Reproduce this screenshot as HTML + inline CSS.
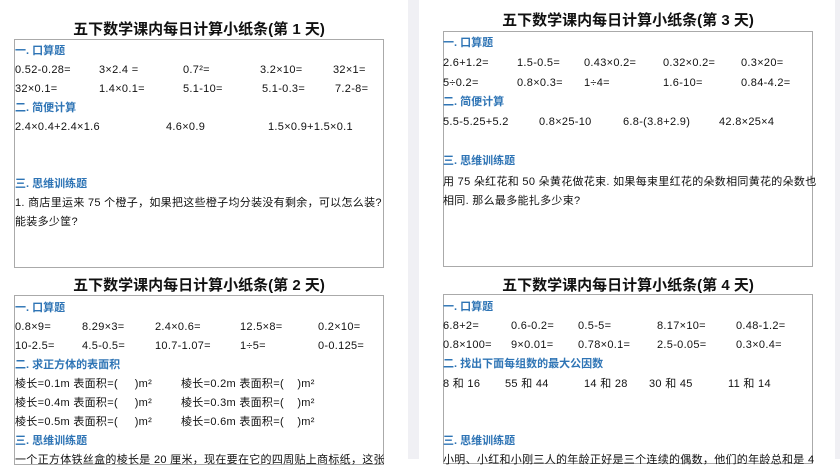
<!DOCTYPE html>
<html><head><meta charset="utf-8"><style>
body{margin:0;width:840px;height:459px;overflow:hidden;background:#fff;position:relative;font-family:"Liberation Sans","Noto Sans CJK SC",sans-serif;color:#111}
.g{position:absolute;top:0;height:459px;background:#f0f0f4}
.box{position:absolute;border:1px solid #aaa;box-sizing:border-box}
.t{position:absolute;font-weight:bold;font-size:15px;white-space:nowrap;transform:translateX(-50%);line-height:16px}
.h{position:absolute;color:#2e74b5;font-weight:bold;font-size:11px;white-space:nowrap;line-height:12px}
.s{position:absolute;font-size:11px;white-space:nowrap;line-height:12px;letter-spacing:0.3px}
</style></head><body>
<div class="g" style="left:408px;width:11px"></div>
<div class="g" style="left:835px;width:5px"></div>

<div class="t" style="left:199px;top:22px">五下数学课内每日计算小纸条(第 1 天)</div>
<div class="box" style="left:14px;top:39px;width:370px;height:229px"></div>
<div class="h" style="left:15px;top:45px">一. 口算题</div>
<div class="s" style="left:15px;top:64px">0.52-0.28=</div><div class="s" style="left:99px;top:64px">3×2.4 =</div><div class="s" style="left:183px;top:64px">0.7²=</div><div class="s" style="left:260px;top:64px">3.2×10=</div><div class="s" style="left:333px;top:64px">32×1=</div>
<div class="s" style="left:15px;top:83px">32×0.1=</div><div class="s" style="left:99px;top:83px">1.4×0.1=</div><div class="s" style="left:183px;top:83px">5.1-10=</div><div class="s" style="left:262px;top:83px">5.1-0.3=</div><div class="s" style="left:335px;top:83px">7.2-8=</div>
<div class="h" style="left:15px;top:102px">二. 简便计算</div>
<div class="s" style="left:15px;top:121px">2.4×0.4+2.4×1.6</div><div class="s" style="left:166px;top:121px">4.6×0.9</div><div class="s" style="left:268px;top:121px">1.5×0.9+1.5×0.1</div>
<div class="h" style="left:15px;top:178px">三. 思维训练题</div>
<div class="s" style="left:15px;top:197px">1. 商店里运来 75 个橙子，如果把这些橙子均分装没有剩余，可以怎么装?</div>
<div class="s" style="left:15px;top:216px">能装多少筐?</div>

<div class="t" style="left:199px;top:278px">五下数学课内每日计算小纸条(第 2 天)</div>
<div class="box" style="left:14px;top:295px;width:370px;height:170px"></div>
<div class="h" style="left:15px;top:302px">一. 口算题</div>
<div class="s" style="left:15px;top:321px">0.8×9=</div><div class="s" style="left:82px;top:321px">8.29×3=</div><div class="s" style="left:155px;top:321px">2.4×0.6=</div><div class="s" style="left:240px;top:321px">12.5×8=</div><div class="s" style="left:318px;top:321px">0.2×10=</div>
<div class="s" style="left:15px;top:340px">10-2.5=</div><div class="s" style="left:82px;top:340px">4.5-0.5=</div><div class="s" style="left:155px;top:340px">10.7-1.07=</div><div class="s" style="left:240px;top:340px">1÷5=</div><div class="s" style="left:318px;top:340px">0-0.125=</div>
<div class="h" style="left:15px;top:359px">二. 求正方体的表面积</div>
<div class="s" style="left:15px;top:378px">棱长=0.1m 表面积=(&nbsp;&nbsp;&nbsp;&nbsp;&nbsp;)m²</div><div class="s" style="left:181px;top:378px">棱长=0.2m 表面积=(&nbsp;&nbsp;&nbsp;&nbsp;)m²</div>
<div class="s" style="left:15px;top:397px">棱长=0.4m 表面积=(&nbsp;&nbsp;&nbsp;&nbsp;&nbsp;)m²</div><div class="s" style="left:181px;top:397px">棱长=0.3m 表面积=(&nbsp;&nbsp;&nbsp;&nbsp;)m²</div>
<div class="s" style="left:15px;top:416px">棱长=0.5m 表面积=(&nbsp;&nbsp;&nbsp;&nbsp;&nbsp;)m²</div><div class="s" style="left:181px;top:416px">棱长=0.6m 表面积=(&nbsp;&nbsp;&nbsp;&nbsp;)m²</div>
<div class="h" style="left:15px;top:435px">三. 思维训练题</div>
<div class="s" style="left:15px;top:454px">一个正方体铁丝盒的棱长是 20 厘米，现在要在它的四周贴上商标纸，这张</div>

<div class="t" style="left:628px;top:13px">五下数学课内每日计算小纸条(第 3 天)</div>
<div class="box" style="left:443px;top:31px;width:370px;height:236px"></div>
<div class="h" style="left:443px;top:37px">一. 口算题</div>
<div class="s" style="left:443px;top:57px">2.6+1.2=</div><div class="s" style="left:517px;top:57px">1.5-0.5=</div><div class="s" style="left:584px;top:57px">0.43×0.2=</div><div class="s" style="left:663px;top:57px">0.32×0.2=</div><div class="s" style="left:741px;top:57px">0.3×20=</div>
<div class="s" style="left:443px;top:77px">5÷0.2=</div><div class="s" style="left:517px;top:77px">0.8×0.3=</div><div class="s" style="left:584px;top:77px">1÷4=</div><div class="s" style="left:663px;top:77px">1.6-10=</div><div class="s" style="left:741px;top:77px">0.84-4.2=</div>
<div class="h" style="left:443px;top:96px">二. 简便计算</div>
<div class="s" style="left:443px;top:116px">5.5-5.25+5.2</div><div class="s" style="left:539px;top:116px">0.8×25-10</div><div class="s" style="left:623px;top:116px">6.8-(3.8+2.9)</div><div class="s" style="left:719px;top:116px">42.8×25×4</div>
<div class="h" style="left:443px;top:155px">三. 思维训练题</div>
<div class="s" style="left:443px;top:176px">用 75 朵红花和 50 朵黄花做花束. 如果每束里红花的朵数相同黄花的朵数也</div>
<div class="s" style="left:443px;top:195px">相同. 那么最多能扎多少束?</div>

<div class="t" style="left:628px;top:278px">五下数学课内每日计算小纸条(第 4 天)</div>
<div class="box" style="left:443px;top:294px;width:370px;height:170px"></div>
<div class="h" style="left:443px;top:301px">一. 口算题</div>
<div class="s" style="left:443px;top:320px">6.8+2=</div><div class="s" style="left:511px;top:320px">0.6-0.2=</div><div class="s" style="left:578px;top:320px">0.5-5=</div><div class="s" style="left:657px;top:320px">8.17×10=</div><div class="s" style="left:736px;top:320px">0.48-1.2=</div>
<div class="s" style="left:443px;top:339px">0.8×100=</div><div class="s" style="left:511px;top:339px">9×0.01=</div><div class="s" style="left:578px;top:339px">0.78×0.1=</div><div class="s" style="left:657px;top:339px">2.5-0.05=</div><div class="s" style="left:736px;top:339px">0.3×0.4=</div>
<div class="h" style="left:443px;top:358px">二. 找出下面每组数的最大公因数</div>
<div class="s" style="left:443px;top:378px">8 和 16</div><div class="s" style="left:505px;top:378px">55 和 44</div><div class="s" style="left:584px;top:378px">14 和 28</div><div class="s" style="left:649px;top:378px">30 和 45</div><div class="s" style="left:728px;top:378px">11 和 14</div>
<div class="h" style="left:443px;top:435px">三. 思维训练题</div>
<div class="s" style="left:443px;top:454px">小明、小红和小刚三人的年龄正好是三个连续的偶数，他们的年龄总和是 4</div>
</body></html>
